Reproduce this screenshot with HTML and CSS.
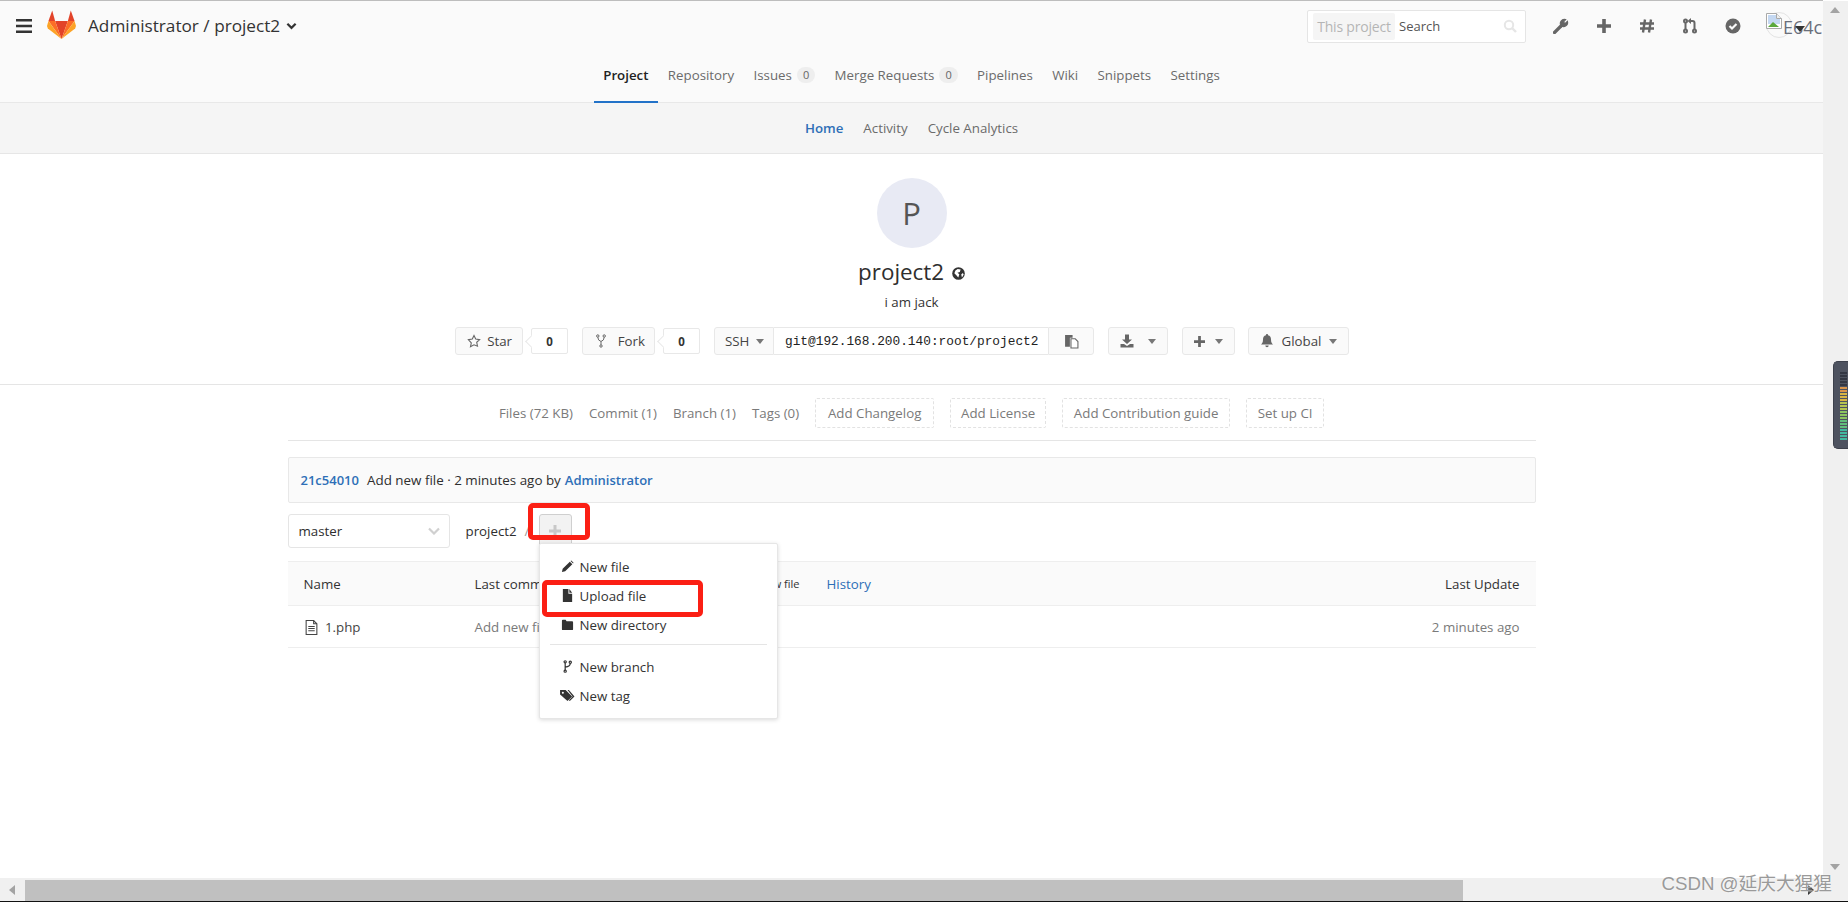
FILE: index.html
```html
<!DOCTYPE html>
<html>
<head>
  <meta charset="UTF-8">
  <title>project2</title>
  <link rel="stylesheet" href="styles.css">
</head>
<body>
  <div class="window">
    <div class="page">
      <div class="navbar">
        <div class="top-row">
          <svg class="hamburger" viewBox="0 0 16 16"><path d="M0 1h16v2.600H0zM0 6.700h16v2.600H0zM0 12.400h16V15H0z"/></svg>
          <svg class="logo" viewBox="0 0 100 100">
            <polygon fill="#e24329" points="50,100 28,38 72,38"/>
            <polygon fill="#fc6d26" points="50,100 28,38 5,38"/>
            <polygon fill="#fca326" points="50,100 5,38 0,55 3,64"/>
            <polygon fill="#e24329" points="5,38 28,38 18,2"/>
            <polygon fill="#fc6d26" points="50,100 72,38 95,38"/>
            <polygon fill="#fca326" points="50,100 95,38 100,55 97,64"/>
            <polygon fill="#e24329" points="95,38 72,38 82,2"/>
          </svg>
          <span class="crumb">Administrator / project2</span>
          <svg class="crumb-caret" viewBox="0 0 12 8"><path d="M1.500 1.500L6 6l4.500-4.500" fill="none" stroke="#333" stroke-width="2.400"/></svg>
          <span class="spacer"></span>
          <div class="search">
            <span class="search-scope">This project</span>
            <span class="search-text">Search</span>
            <span class="spacer"></span>
            <svg class="search-icon" viewBox="0 0 14 14"><circle cx="6" cy="6" r="4.200" fill="none" stroke="#e6e6e6" stroke-width="2"/><path d="M9 9l4 4" stroke="#e6e6e6" stroke-width="2.400"/></svg>
          </div>
          <div class="top-icons">
            <svg viewBox="0 0 16 16"><path d="M1.500 14.500L8 8" stroke="#666" stroke-width="3.200" stroke-linecap="round"/><path d="M8.200 7.800A4 4 0 0 1 12.600 1.600L10.400 4l1.600 1.600 2.400-2.200a4 4 0 0 1-6.200 4.400z" fill="#666" stroke="#666" stroke-width="1.200"/></svg>
            <svg viewBox="0 0 16 16"><path d="M1 6.200h5.200V1h3.600v5.200H15v3.600H9.800V15H6.200V9.800H1z" fill="#666"/></svg>
            <svg viewBox="0 0 16 16"><path d="M6 1.500L4 14.500M12 1.500l-2 13M1 5.500h14M1 10.500h14" fill="none" stroke="#666" stroke-width="2.400"/></svg>
            <svg viewBox="0 0 16 16"><g fill="none" stroke="#666" stroke-width="2"><circle cx="3.500" cy="3" r="1.500"/><circle cx="3.500" cy="13" r="1.500"/><circle cx="12.500" cy="13" r="1.500"/><path d="M3.500 4.500v7M12.500 11.500V5q0-2-2-2H8"/></g><path d="M9 0v6L5.500 3z" fill="#666"/></svg>
            <svg viewBox="0 0 16 16"><circle cx="8" cy="8" r="7.500" fill="#666"/><path d="M4.500 8l2.500 2.500 4.500-4.500" fill="none" stroke="#fafafa" stroke-width="2.200"/></svg>
          </div>
          <div class="user-menu">
            <span class="user-circle"></span>
            <svg class="broken-img" viewBox="0 0 16 16">
              <path d="M.5.500h10l5 5v10H.500z" fill="#fff" stroke="#a9a9a9"/>
              <path d="M2 2h8v4h4v5H2z" fill="#c4d8f2"/>
              <path d="M2 14l5-5 6 5z" fill="#5aa83c"/>
              <path d="M10.500.500v5h5" fill="#eee" stroke="#a9a9a9"/>
            </svg>
            <span class="user-alt">E64c7</span>
            <span class="user-caret"></span>
          </div>
        </div>
        <div class="tabs">
          <a class="tab active">Project</a>
          <a class="tab">Repository</a>
          <a class="tab">Issues <span class="badge">0</span></a>
          <a class="tab">Merge Requests <span class="badge">0</span></a>
          <a class="tab">Pipelines</a>
          <a class="tab">Wiki</a>
          <a class="tab">Snippets</a>
          <a class="tab">Settings</a>
        </div>
      </div>

      <div class="subnav">
        <a class="sub-active">Home</a>
        <a>Activity</a>
        <a>Cycle Analytics</a>
      </div>

      <div class="project-home">
        <div class="avatar">P</div>
        <h1 class="project-name">project2
          <svg class="globe" viewBox="0 0 12 12"><circle cx="6" cy="6" r="5.800" fill="#333"/><path d="M5.200 1.800L8 2.200 7.200 4.500 5 5.200 6.800 6.800 5.800 9.800 4 7.500 2.200 5.800 3.200 3.200zM10 5.500l.8 1.500-1.600 2.800-.7-2.800z" fill="#fff"/></svg>
        </h1>
        <div class="project-desc">i am jack</div>
        <div class="project-actions">
          <a class="btn btn-star">
            <svg class="btn-icon star-icon" viewBox="0 0 14 14"><path d="M7 1.500l1.700 3.600 3.900.500-2.900 2.700.800 3.900L7 10.800l-3.500 1.900.800-3.900L1.400 5.600l3.900-.500z" fill="none" stroke="#666" stroke-width="1.100"/></svg>
            Star
          </a>
          <span class="count">0</span>
          <a class="btn btn-fork">
            <svg class="btn-icon fork-icon" viewBox="0 0 10 14" fill="none" stroke="#666" stroke-width="1"><circle cx="1.800" cy="2" r="1.200"/><circle cx="8.200" cy="2" r="1.200"/><circle cx="5" cy="12" r="1.200"/><path d="M1.800 3.200q0 3.300 3.200 4.300 3.200-1 3.200-4.300M5 7.500v3.300"/></svg>
            Fork
          </a>
          <span class="count">0</span>
          <div class="clone">
            <a class="clone-type">SSH <span class="caret"></span></a>
            <span class="clone-url">git@192.168.200.140:root/project2</span>
            <a class="clone-copy">
              <svg viewBox="0 0 14 14"><path d="M1 1h7v2.500H5.500V12H1z" fill="#666"/><path d="M6.500 4.500h4l2.500 2.500v6H6.500z" fill="#fff" stroke="#666"/></svg>
            </a>
          </div>
          <a class="btn btn-download">
            <svg class="btn-icon" viewBox="0 0 14 14"><path d="M5 .500h4v5h3L7 10 2 5.500h3z" fill="#666"/><path d="M.500 10h3.500l3 2 3-2h3.500v3.500H.500z" fill="#666"/></svg>
            <span class="caret"></span>
          </a>
          <a class="btn btn-plus">
            <svg class="btn-icon plus-icon" viewBox="0 0 12 12"><path d="M0 4.500h4.500V0h3v4.500H12v3H7.500V12h-3V7.500H0z" fill="#666"/></svg>
            <span class="caret"></span>
          </a>
          <a class="btn btn-global">
            <svg class="btn-icon" viewBox="0 0 14 14"><path d="M7 0a1 1 0 0 1 1 1.200c2.200.500 3 2.300 3 4.300 0 3 1 3.800 2 5H1c1-1.200 2-2 2-5 0-2 .800-3.800 3-4.300A1 1 0 0 1 7 0zM5.300 11.500h3.400a1.700 1.700 0 0 1-3.400 0z" fill="#666"/></svg>
            Global <span class="caret"></span>
          </a>
        </div>
      </div>

      <div class="stats">
        <a class="stat">Files (72 KB)</a>
        <a class="stat">Commit (1)</a>
        <a class="stat">Branch (1)</a>
        <a class="stat">Tags (0)</a>
        <a class="add-link add-changelog">Add Changelog</a>
        <a class="add-link add-license">Add License</a>
        <a class="add-link add-guide">Add Contribution guide</a>
        <a class="add-link add-ci">Set up CI</a>
      </div>

      <div class="container">
        <div class="last-commit">
          <a class="sha">21c54010</a>
          <span class="commit-msg">Add new file · 2 minutes ago by</span>
          <a class="author">Administrator</a>
        </div>

        <div class="tree-bar">
          <div class="branch-select">
            master
            <svg viewBox="0 0 12 8"><path d="M1 1.500L6 6.500l5-5" fill="none" stroke="#d0d0d0" stroke-width="2.200"/></svg>
          </div>
          <span class="tree-root">project2</span>
          <span class="tree-slash">/</span>
          <div class="tree-add">
            <a class="add-btn">
              <svg viewBox="0 0 12 12"><path d="M0 4.500h4.500V0h3v4.500H12v3H7.500V12h-3V7.500H0z" fill="#c8c8c8"/></svg>
            </a>
            <ul class="add-menu">
              <li>
                <svg viewBox="0 0 14 14"><path d="M1 13l.800-3.500L9.500 1.800l2.700 2.700-7.700 7.700zM10.300 1l.800-.500 2.400 2.400-.500.800z" fill="#333"/></svg>
                New file
              </li>
              <li>
                <svg viewBox="0 0 14 14"><path d="M2 0h6v5h4v9H2zM9 0l3 4H9z" fill="#333"/></svg>
                Upload file
              </li>
              <li>
                <svg viewBox="0 0 14 14"><path d="M1 3q0-1 1-1h3l1 1.500h6q1 0 1 1V12q0 1-1 1H2q-1 0-1-1z" fill="#333"/></svg>
                New directory
              </li>
              <li class="divider"></li>
              <li>
                <svg viewBox="0 0 14 14" fill="none" stroke="#333" stroke-width="1.300"><circle cx="4.500" cy="2" r="1.200"/><circle cx="4.500" cy="12" r="1.200"/><circle cx="10" cy="2.500" r="1.200"/><path d="M4.500 3.200v7.600M10 3.700q0 3-5.500 4"/></svg>
                New branch
              </li>
              <li>
                <svg class="tag-icon" viewBox="0 0 16 14"><path d="M0 1h6l7 7-5 5-8-7z" fill="#333"/><path d="M8 1h1.500l6 7-5 5-1-1 4-4z" fill="#333"/><circle cx="3" cy="4" r="1.100" fill="#fff"/></svg>
                New tag
              </li>
            </ul>
          </div>
        </div>

        <table class="tree-table">
          <thead>
            <tr>
              <th class="col-name">Name</th>
              <th class="col-commit">
                <span class="head-commit">
                  <span>Last commit</span>
                  <span class="head-msg">Add new file</span>
                  <a class="history">History</a>
                </span>
              </th>
              <th class="col-update">Last Update</th>
            </tr>
          </thead>
          <tbody>
            <tr>
              <td class="file-name">
                <svg viewBox="0 0 12 14"><path d="M1 .500h7l3 3v10H1z" fill="none" stroke="#444"/><path d="M8 .500v3h3M3 6h6M3 8h6M3 10h6" fill="none" stroke="#444"/></svg>
                1.php
              </td>
              <td class="file-msg">Add new file</td>
              <td class="file-time">2 minutes ago</td>
            </tr>
          </tbody>
        </table>
      </div>

      <span class="mark mark-add"></span>
      <span class="mark mark-upload"></span>
    </div>

    <div class="vscroll">
      <span class="arrow arrow-up"></span>
      <span class="arrow arrow-down"></span>
      <div class="meter">
        <i class="off"></i><i class="off"></i><i class="off"></i><i class="off"></i><i class="off"></i>
        <i class="c1"></i><i class="c1"></i><i class="c2"></i><i class="c2"></i><i class="c2"></i>
        <i class="c3"></i><i class="c3"></i><i class="c3"></i><i class="c4"></i><i class="c4"></i>
        <i class="c4"></i><i class="c5"></i><i class="c5"></i><i class="c5"></i><i class="c6"></i>
        <i class="c6"></i><i class="c6"></i><i class="c6"></i>
      </div>
    </div>
  </div>

  <div class="hscroll">
    <span class="arrow-left"></span>
    <div class="hthumb"></div>
    <span class="arrow-right"></span>
  </div>
  <div class="watermark">CSDN @延庆大猩猩</div>
</body>
</html>
```

FILE: styles.css
```css
:root {
  --text: #2e2e2e;
  --muted: #7a7a7a;
  --border: #e5e5e5;
  --blue: #2e6fb7;
  --nav-bg: #fafafa;
}

* {
  box-sizing: border-box;
}

html, body {
  height: 100%;
  margin: 0;
  overflow: hidden;
}

body {
  display: flex;
  flex-direction: column;
  position: relative;
  width: 1848px;
  height: 902px;
  font-family: "Open Sans", "Noto Sans", sans-serif;
  font-size: 13.300px;
  color: var(--text);
  background: white;
}

a {
  color: inherit;
  text-decoration: none;
}

.window {
  display: flex;
  flex: 1;
  min-height: 0;
}

.page {
  position: relative;
  flex: 1;
  min-width: 0;
  overflow: hidden;
}

.spacer {
  flex: 1;
}

/* top bar */

.navbar {
  height: 103px;
  background: var(--nav-bg);
  border-top: 1px solid #bdbdbd;
  border-bottom: 1px solid #e8e8e8;
}

.top-row {
  display: flex;
  align-items: center;
  height: 49px;
  padding: 0 0 0 16px;
}

.hamburger {
  width: 16px;
  height: 16px;
  fill: #333;
  margin-top: 1px;
}

.logo {
  width: 29px;
  height: 31px;
  margin-left: 15px;
  margin-top: -3px;
}

.crumb {
  margin-left: 12px;
  font-size: 17.200px;
  color: #333;
  white-space: nowrap;
}

.crumb-caret {
  width: 11px;
  height: 8px;
  margin-left: 6px;
}

.search {
  display: flex;
  align-items: center;
  width: 219px;
  height: 33px;
  margin-top: 1px;
  padding: 0 8px 0 5px;
  background: white;
  border: 1px solid var(--border);
  border-radius: 2px;
}

.search-scope {
  display: flex;
  align-items: center;
  justify-content: center;
  width: 82px;
  height: 27px;
  font-size: 14px;
  letter-spacing: -0.2px;
  background: #f5f5f5;
  color: #b5b5b5;
  border-radius: 2px;
  white-space: nowrap;
}

.search-text {
  margin-left: 4px;
  font-size: 13px;
  color: #555;
}

.search-icon {
  width: 14px;
  height: 14px;
}

.top-icons {
  display: flex;
  gap: 27px;
  margin-left: 27px;
  margin-right: 25px;
}

.top-icons svg {
  width: 16px;
  height: 16px;
  display: block;
}

.user-menu {
  position: relative;
  width: 57px;
  height: 49px;
  overflow: hidden;
}

.user-circle {
  position: absolute;
  left: 0;
  top: 11px;
  width: 26px;
  height: 26px;
  border: 1px solid #e3e3e3;
  border-radius: 50%;
}

.broken-img {
  position: absolute;
  left: 0;
  top: 12px;
  width: 16px;
  height: 16px;
}

.user-alt {
  position: absolute;
  left: 17px;
  top: 14px;
  font-size: 18px;
  line-height: 24px;
  color: #6a6f7a;
  white-space: nowrap;
}

.user-caret {
  position: absolute;
  left: 29px;
  top: 25px;
  border: 5px solid transparent;
  border-top: 6px solid #333;
  border-bottom: 0;
}

.tabs {
  display: flex;
  justify-content: center;
  height: 53px;
}

.tab {
  display: flex;
  align-items: center;
  gap: 5px;
  padding: 0 9.700px 2px;
  color: #6b6b6b;
  border-bottom: 2px solid transparent;
  white-space: nowrap;
}

.tab.active {
  color: #222;
  font-weight: 600;
  border-bottom-color: #2272c8;
}

.badge {
  display: inline-block;
  padding: 0 6px;
  line-height: 16px;
  font-size: 11px;
  color: #666;
  background: #eee;
  border-radius: 8px;
}

.subnav {
  display: flex;
  justify-content: center;
  align-items: center;
  gap: 20px;
  height: 51px;
  background: #f5f5f5;
  border-bottom: 1px solid #e6e6e6;
  color: #6b6b6b;
}

.sub-active {
  color: var(--blue);
  font-weight: 600;
}

/* project head */

.project-home {
  display: flex;
  flex-direction: column;
  align-items: center;
  height: 231px;
  padding-top: 24px;
  border-bottom: 1px solid #e5e5e5;
}

.avatar {
  width: 70px;
  height: 70px;
  line-height: 70px;
  text-align: center;
  font-size: 31px;
  color: #555;
  background: #e8eaf4;
  border-radius: 50%;
}

.project-name {
  margin: 9px 0 0;
  font-size: 22.400px;
  line-height: 30px;
  font-weight: 400;
  color: #2e2e2e;
}

.globe {
  width: 13px;
  height: 13px;
  margin-left: 2px;
}

.project-desc {
  margin-top: 5px;
  line-height: 20px;
  color: #333;
}

.project-actions {
  display: flex;
  align-items: stretch;
  height: 28px;
  margin-top: 15px;
  margin-right: 19px;
}

.btn {
  display: flex;
  align-items: center;
  justify-content: space-between;
  padding: 0 11px;
  color: #444;
  background: var(--nav-bg);
  border: 1px solid #e8e8e8;
  border-radius: 3px;
  white-space: nowrap;
}

.btn-icon {
  width: 14px;
  height: 14px;
}

.btn-star { width: 68px; padding-right: 10px; }
.btn-fork { width: 73px; padding-right: 9px; }
.btn-download { width: 60px; margin-left: 14px; }
.btn-plus { width: 53px; margin-left: 14px; }
.btn-global { width: 101px; margin-left: 13px; }

.fork-icon { width: 10px; height: 14px; margin-left: 2px; }
.plus-icon { width: 11px; height: 11px; }

.caret {
  display: inline-block;
  border: 4px solid transparent;
  border-top: 5px solid #777;
  border-bottom: 0;
  vertical-align: middle;
}

.count {
  position: relative;
  display: flex;
  align-items: center;
  justify-content: center;
  width: 37px;
  margin: 1px 14px 1px 8px;
  font-size: 11.500px;
  font-weight: 700;
  color: #333;
  background: white;
  border: 1px solid #e8e8e8;
  border-radius: 2px;
}

.count::before {
  content: "";
  position: absolute;
  left: -5px;
  top: 8px;
  width: 8px;
  height: 8px;
  background: white;
  border-left: 1px solid #e8e8e8;
  border-bottom: 1px solid #e8e8e8;
  transform: rotate(45deg);
}

.clone {
  display: flex;
}

.clone-type {
  display: flex;
  align-items: center;
  gap: 7px;
  width: 60px;
  padding-left: 10px;
  color: #444;
  background: var(--nav-bg);
  border: 1px solid #e8e8e8;
  border-radius: 3px 0 0 3px;
}

.clone-url {
  display: flex;
  align-items: center;
  width: 274px;
  padding-left: 11px;
  font-family: "Liberation Mono", monospace;
  font-size: 12.800px;
  color: #222;
  background: white;
  border-top: 1px solid #e8e8e8;
  border-bottom: 1px solid #e8e8e8;
}

.clone-copy {
  display: flex;
  align-items: center;
  justify-content: center;
  width: 46px;
  background: var(--nav-bg);
  border: 1px solid #e8e8e8;
  border-radius: 0 3px 3px 0;
}

.clone-copy svg {
  width: 15px;
  height: 15px;
}

/* stats row */

.stats {
  display: flex;
  justify-content: center;
  align-items: center;
  gap: 16px;
  height: 55px;
  color: var(--muted);
  white-space: nowrap;
}

.add-link {
  display: flex;
  align-items: center;
  justify-content: center;
  height: 30px;
  border: 1px dashed #e2e2e2;
  border-radius: 2px;
}

.add-changelog { width: 119px; }
.add-license { width: 96px; }
.add-guide { width: 168px; }
.add-ci { width: 78px; }

/* files */

.container {
  width: 1248px;
  margin: 0 auto;
  padding-top: 16px;
  border-top: 1px solid #e5e5e5;
}

.last-commit {
  display: flex;
  align-items: center;
  gap: 8px;
  height: 46px;
  padding-left: 12px;
  font-size: 13px;
  background: var(--nav-bg);
  border: 1px solid #e8e8e8;
  border-radius: 2px;
}

.sha {
  color: var(--blue);
  font-weight: 600;
}

.commit-msg {
  font-size: 13.400px;
}

.author {
  margin-left: -4px;
  color: var(--blue);
  font-weight: 600;
}

.tree-bar {
  position: relative;
  display: flex;
  align-items: center;
  height: 34px;
  margin-top: 11px;
}

.branch-select {
  display: flex;
  align-items: center;
  justify-content: space-between;
  width: 162px;
  height: 34px;
  padding: 0 9px 0 10px;
  background: white;
  border: 1px solid #e5e5e5;
  border-radius: 3px;
}

.branch-select svg {
  width: 12px;
  height: 8px;
}

.tree-root {
  width: 59px;
  margin-left: 16px;
}

.tree-slash {
  width: 14px;
  color: #999;
}

.tree-add {
  position: relative;
  align-self: flex-start;
}

.add-btn {
  display: flex;
  align-items: center;
  justify-content: center;
  width: 33px;
  height: 34px;
  background: #f2f2f2;
  border: 1px solid #cfcfcf;
  border-radius: 3px;
}

.add-btn svg {
  width: 12px;
  height: 12px;
}

.add-menu {
  position: absolute;
  z-index: 5;
  left: 0;
  top: 29px;
  width: 239px;
  height: 176px;
  margin: 0;
  padding: 8px 0 0;
  list-style: none;
  background: white;
  border: 1px solid #e6e6e6;
  border-radius: 2px;
  box-shadow: 0 1px 4px rgba(0, 0, 0, 0.15);
}

.add-menu li {
  display: flex;
  align-items: center;
  gap: 6px;
  height: 29px;
  padding-left: 21px;
  color: #333;
}

.add-menu li svg {
  width: 13px;
  height: 13px;
}

.add-menu li .tag-icon {
  width: 15px;
  margin-left: -1px;
  margin-right: -1px;
}

.add-menu li.divider {
  height: 1px;
  margin: 5px 10px 7px;
  padding: 0;
  background: #e5e5e5;
}

.tree-table {
  width: 100%;
  margin-top: 13px;
  border-collapse: collapse;
  table-layout: fixed;
}

.tree-table th {
  height: 44px;
  font-weight: 400;
  text-align: left;
  color: #333;
  background: var(--nav-bg);
  border-top: 1px solid #eee;
  border-bottom: 1px solid #eee;
}

.tree-table td {
  height: 42px;
  border-bottom: 1px solid #eee;
}

.col-name { width: 186px; padding-left: 16px; }
.col-update { width: 200px; padding-right: 16px; text-align: right !important; }

.head-commit {
  display: flex;
  align-items: center;
}

.head-msg {
  margin-left: 186px;
  font-size: 11px;
  white-space: nowrap;
}

.history {
  margin-left: 27px;
  color: var(--blue);
}

.file-name {
  padding-left: 17px;
  color: #444;
}

.file-name svg {
  width: 13px;
  height: 15px;
  margin-right: 4px;
  vertical-align: -3px;
}

.file-msg {
  color: var(--muted);
}

.file-time {
  padding-right: 16px;
  text-align: right;
  color: var(--muted);
}

/* red marks drawn over the screenshot */

.mark {
  position: absolute;
  z-index: 6;
  border: 5px solid #fb1f14;
  border-radius: 5px;
}

.mark-add {
  left: 528px;
  top: 503px;
  width: 62px;
  height: 37px;
}

.mark-upload {
  left: 542px;
  top: 580px;
  width: 161px;
  height: 37px;
}

/* window scrollbars */

.vscroll {
  position: relative;
  width: 25px;
  background: #f0f0f0;
  margin-top: 1px;
}

.arrow {
  position: absolute;
  left: 7px;
  border: 5.500px solid transparent;
}

.arrow-up {
  top: 6px;
  border-bottom: 6px solid #a3a3a3;
  border-top: 0;
}

.arrow-down {
  bottom: 8px;
  border-top: 6px solid #a3a3a3;
  border-bottom: 0;
}

.meter {
  position: absolute;
  left: 10px;
  top: 360px;
  width: 15px;
  height: 88px;
  padding: 10px 0 0 6px;
  display: flex;
  flex-direction: column;
  gap: 1px;
  background: #4e5360;
  border: 1px solid #3d414c;
  border-right: 0;
  border-radius: 5px 0 0 5px;
}

.meter i {
  display: block;
  width: 7px;
  height: 2px;
}

.meter .off { background: #333743; }
.meter .c1 { background: #d9954a; }
.meter .c2 { background: #d8b544; }
.meter .c3 { background: #b6c450; }
.meter .c4 { background: #8cc460; }
.meter .c5 { background: #62bd7c; }
.meter .c6 { background: #43b8a0; }

.hscroll {
  position: relative;
  display: flex;
  align-items: center;
  flex: 0 0 24px;
  padding-top: 2px;
  background: #f0f0f0;
  border-bottom: 1px solid #111;
}

.arrow-left {
  position: absolute;
  left: 9px;
  top: 7px;
  border: 5.500px solid transparent;
  border-right: 6px solid #a3a3a3;
  border-left: 0;
}

.hthumb {
  width: 1438px;
  height: 100%;
  margin-left: 25px;
  background: #c0c0c0;
}

.arrow-right {
  position: absolute;
  left: 1808px;
  top: 7px;
  border: 5.500px solid transparent;
  border-left: 6px solid #333;
  border-right: 0;
}

.watermark {
  position: absolute;
  z-index: 9;
  right: 16px;
  bottom: 6px;
  font-family: "Liberation Sans", "Noto Sans CJK SC", sans-serif;
  font-size: 18.700px;
  line-height: 24px;
  color: #9a9a9a;
  text-shadow: 0 0 2px #fff;
  white-space: nowrap;
}
```
